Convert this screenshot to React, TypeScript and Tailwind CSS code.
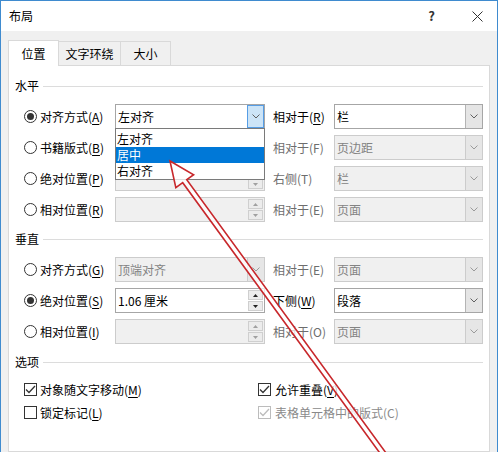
import React from "react";

const Chevron = ({ color = "#606060" }: { color?: string }) => (
  <svg width="8" height="5" viewBox="0 0 8 5" fill="none">
    <path d="M0.5 0.5L4 4L7.5 0.5" stroke={color} strokeWidth="1" />
  </svg>
);

const Tri = ({ up, color }: { up?: boolean; color: string }) => (
  <svg width="5" height="3" viewBox="0 0 5 3">
    <path d={up ? "M0 3L2.5 0L5 3Z" : "M0 0L2.5 3L5 0Z"} fill={color} />
  </svg>
);

const Radio = ({ checked = false }: { checked?: boolean }) => (
  <span className="w-[13px] h-[13px] rounded-full border border-[#333333] bg-white flex items-center justify-center shrink-0">
    {checked && <span className="w-[7px] h-[7px] rounded-full bg-[#333333]" />}
  </span>
);

const Check = ({ checked = false, disabled = false }: { checked?: boolean; disabled?: boolean }) => (
  <span
    className={
      "w-[13px] h-[13px] border bg-white flex items-center justify-center shrink-0 " +
      (disabled ? "border-[#bcbcbc]" : "border-[#333333]")
    }
  >
    {checked && (
      <svg width="11" height="9" viewBox="0 0 11 9" fill="none">
        <path d="M1 4.5L4 7.5L10 1" stroke={disabled ? "#bcbcbc" : "#333333"} strokeWidth="1.3" />
      </svg>
    )}
  </span>
);

const Mn = ({ children }: { children: React.ReactNode }) => <span className="underline underline-offset-2">{children}</span>;

type ComboProps = { value?: string; disabled?: boolean; open?: boolean; w: string };

const Combo = ({ value, disabled, open, w }: ComboProps) => (
  <div
    className={
      "relative h-[25px] flex border shrink-0 " +
      w +
      (disabled ? " bg-[#f0f0f0] border-[#cccccc] text-[#838383]" : " bg-white border-[#a6a6a6] text-black")
    }
  >
    <span className="flex-1 pl-[2px] flex items-center">{value}</span>
    <span
      className={
        "w-[17px] flex items-center justify-center border-l " +
        (open
          ? "bg-[#cce4f7] border border-[#569de5]"
          : disabled
          ? "bg-[#e6e6e6] border-[#cccccc]"
          : "bg-[#e5e5e5] border-[#b4b4b4]")
      }
    >
      <Chevron color={disabled ? "#9a9a9a" : "#606060"} />
    </span>
    {open && (
      <div className="absolute left-[-1px] top-[23px] w-[150px] bg-white border border-[#7a7a7a] pt-px z-10 text-black">
        <div className="h-[17px] pl-[1px] flex items-center">左对齐</div>
        <div className="h-[16px] pl-[1px] flex items-center bg-[#0078d7] text-white">居中</div>
        <div className="h-[16px] pl-[1px] flex items-center">右对齐</div>
      </div>
    )}
  </div>
);

const Spin = ({ value, disabled }: { value?: string; disabled?: boolean }) => (
  <div
    className={
      "h-[25px] w-[150px] flex border shrink-0 " +
      (disabled ? "bg-[#f0f0f0] border-[#cccccc] text-[#838383]" : "bg-white border-[#a6a6a6] text-black")
    }
  >
    <span className="flex-1 pl-[2px] flex items-center">{value}</span>
    <div className="w-[16px] flex flex-col py-px pr-px gap-px">
      <span className="flex-1 border border-[#cfcfcf] bg-[#ececec] flex items-center justify-center">
        <Tri up color={disabled ? "#a0a0a0" : "#222222"} />
      </span>
      <span className="flex-1 border border-[#cfcfcf] bg-[#ececec] flex items-center justify-center">
        <Tri color={disabled ? "#a0a0a0" : "#222222"} />
      </span>
    </div>
  </div>
);

type RowProps = {
  checked?: boolean;
  label: React.ReactNode;
  left: React.ReactNode;
  rightLabel: React.ReactNode;
  rightGrey?: boolean;
  right: React.ReactNode;
};

const Row = ({ checked, label, left, rightLabel, rightGrey, right }: RowProps) => (
  <div className="flex items-center h-[25px] pl-[15px]">
    <Radio checked={checked} />
    <span className="ml-[3px] w-[75px] shrink-0">{label}</span>
    {left}
    <span className={"ml-[8px] w-[61px] shrink-0 " + (rightGrey ? "text-[#6d6d6d]" : "text-black")}>{rightLabel}</span>
    {right}
  </div>
);

const Section = ({ title }: { title: string }) => (
  <div className="h-[16px] flex items-center gap-[4px] pl-[6px] pr-[6px]">
    <span>{title}</span>
    <span className="flex-1 h-px bg-[#dcdcdc]" />
  </div>
);

export default function App() {
  return (
    <div className="w-[500px] h-[452px] bg-white overflow-hidden relative font-['Noto_Sans_CJK_SC','Noto_Sans',sans-serif] text-[12px] leading-[16px] text-black">
      <div className="w-[498px] h-full border-x border-t border-[#3f8bcf] flex flex-col">
        <div className="h-[30px] bg-white flex items-center pl-[8px] pr-[14px] shrink-0">
          <span>布局</span>
          <span className="ml-auto text-[13px] font-bold text-[#333333]">?</span>
          <svg className="ml-[37px]" width="11" height="11" viewBox="0 0 11 11">
            <path d="M0.5 0.5L10.5 10.5M10.5 0.5L0.5 10.5" stroke="#333333" strokeWidth="1" />
          </svg>
        </div>
        <div className="flex-1 bg-[#f0f0f0] px-[7px] pt-[9px] flex flex-col">
          <div className="h-[25px] flex items-end shrink-0">
            <div className="h-[26px] w-[51px] -mb-px bg-white border-x border-t border-[#d9d9d9] flex items-center justify-center relative z-10">
              位置
            </div>
            <div className="h-[24px] w-[62px] border-r border-t border-[#d9d9d9] flex items-center justify-center">
              文字环绕
            </div>
            <div className="h-[24px] w-[50px] border-r border-t border-[#d9d9d9] flex items-center justify-center">
              大小
            </div>
          </div>
          <div className="flex-1 bg-white border border-[#d9d9d9] pt-[12px]">
            <Section title="水平" />
            <div className="mt-[10px] flex flex-col gap-[6px]">
              <Row
                checked
                label={<>对齐方式(<Mn>A</Mn>)</>}
                left={<Combo value="左对齐" open w="w-[150px]" />}
                rightLabel={<>相对于(<Mn>R</Mn>)</>}
                right={<Combo value="栏" w="w-[149px]" />}
              />
              <Row
                label={<>书籍版式(<Mn>B</Mn>)</>}
                left={<Combo disabled w="w-[150px]" />}
                rightLabel="相对于(F)"
                rightGrey
                right={<Combo value="页边距" disabled w="w-[149px]" />}
              />
              <Row
                label={<>绝对位置(<Mn>P</Mn>)</>}
                left={<Spin disabled />}
                rightLabel="右侧(T)"
                rightGrey
                right={<Combo value="栏" disabled w="w-[149px]" />}
              />
              <Row
                label={<>相对位置(<Mn>R</Mn>)</>}
                left={<Spin disabled />}
                rightLabel="相对于(E)"
                rightGrey
                right={<Combo value="页面" disabled w="w-[149px]" />}
              />
            </div>
            <div className="mt-[9px]">
              <Section title="垂直" />
            </div>
            <div className="mt-[10px] flex flex-col gap-[6px]">
              <Row
                label={<>对齐方式(<Mn>G</Mn>)</>}
                left={<Combo value="顶端对齐" disabled w="w-[150px]" />}
                rightLabel="相对于(E)"
                rightGrey
                right={<Combo value="页面" disabled w="w-[149px]" />}
              />
              <Row
                checked
                label={<>绝对位置(<Mn>S</Mn>)</>}
                left={<Spin value="1.06 厘米" />}
                rightLabel={<>下侧(<Mn>W</Mn>)</>}
                right={<Combo value="段落" w="w-[149px]" />}
              />
              <Row
                label={<>相对位置(<Mn>I</Mn>)</>}
                left={<Spin disabled />}
                rightLabel="相对于(O)"
                rightGrey
                right={<Combo value="页面" disabled w="w-[149px]" />}
              />
            </div>
            <div className="mt-[10px]">
              <Section title="选项" />
            </div>
            <div className="mt-[11px] flex flex-col gap-[6px] pl-[15px]">
              <div className="h-[17px] flex items-center">
                <div className="w-[234px] flex items-center gap-[3px]">
                  <Check checked />
                  <span>对象随文字移动(<Mn>M</Mn>)</span>
                </div>
                <div className="flex items-center gap-[4px]">
                  <Check checked />
                  <span>允许重叠(<Mn>V</Mn>)</span>
                </div>
              </div>
              <div className="h-[17px] flex items-center">
                <div className="w-[234px] flex items-center gap-[3px]">
                  <Check />
                  <span>锁定标记(<Mn>L</Mn>)</span>
                </div>
                <div className="flex items-center gap-[4px] text-[#8a8a8a]">
                  <Check checked disabled />
                  <span>表格单元格中的版式(C)</span>
                </div>
              </div>
            </div>
          </div>
        </div>
      </div>
      <svg className="absolute left-0 top-0 pointer-events-none z-20" width="500" height="452" viewBox="0 0 500 452">
        <g transform="translate(170 161) rotate(53.9)">
          <polygon
            points="0,0 25,-11 25,-2.5 420,-2.5 420,2.5 25,2.5 25,11"
            fill="#ffffff"
            fillOpacity="0.75"
            stroke="#c8282c"
            strokeWidth="1.6"
            strokeLinejoin="miter"
          />
        </g>
      </svg>
    </div>
  );
}
